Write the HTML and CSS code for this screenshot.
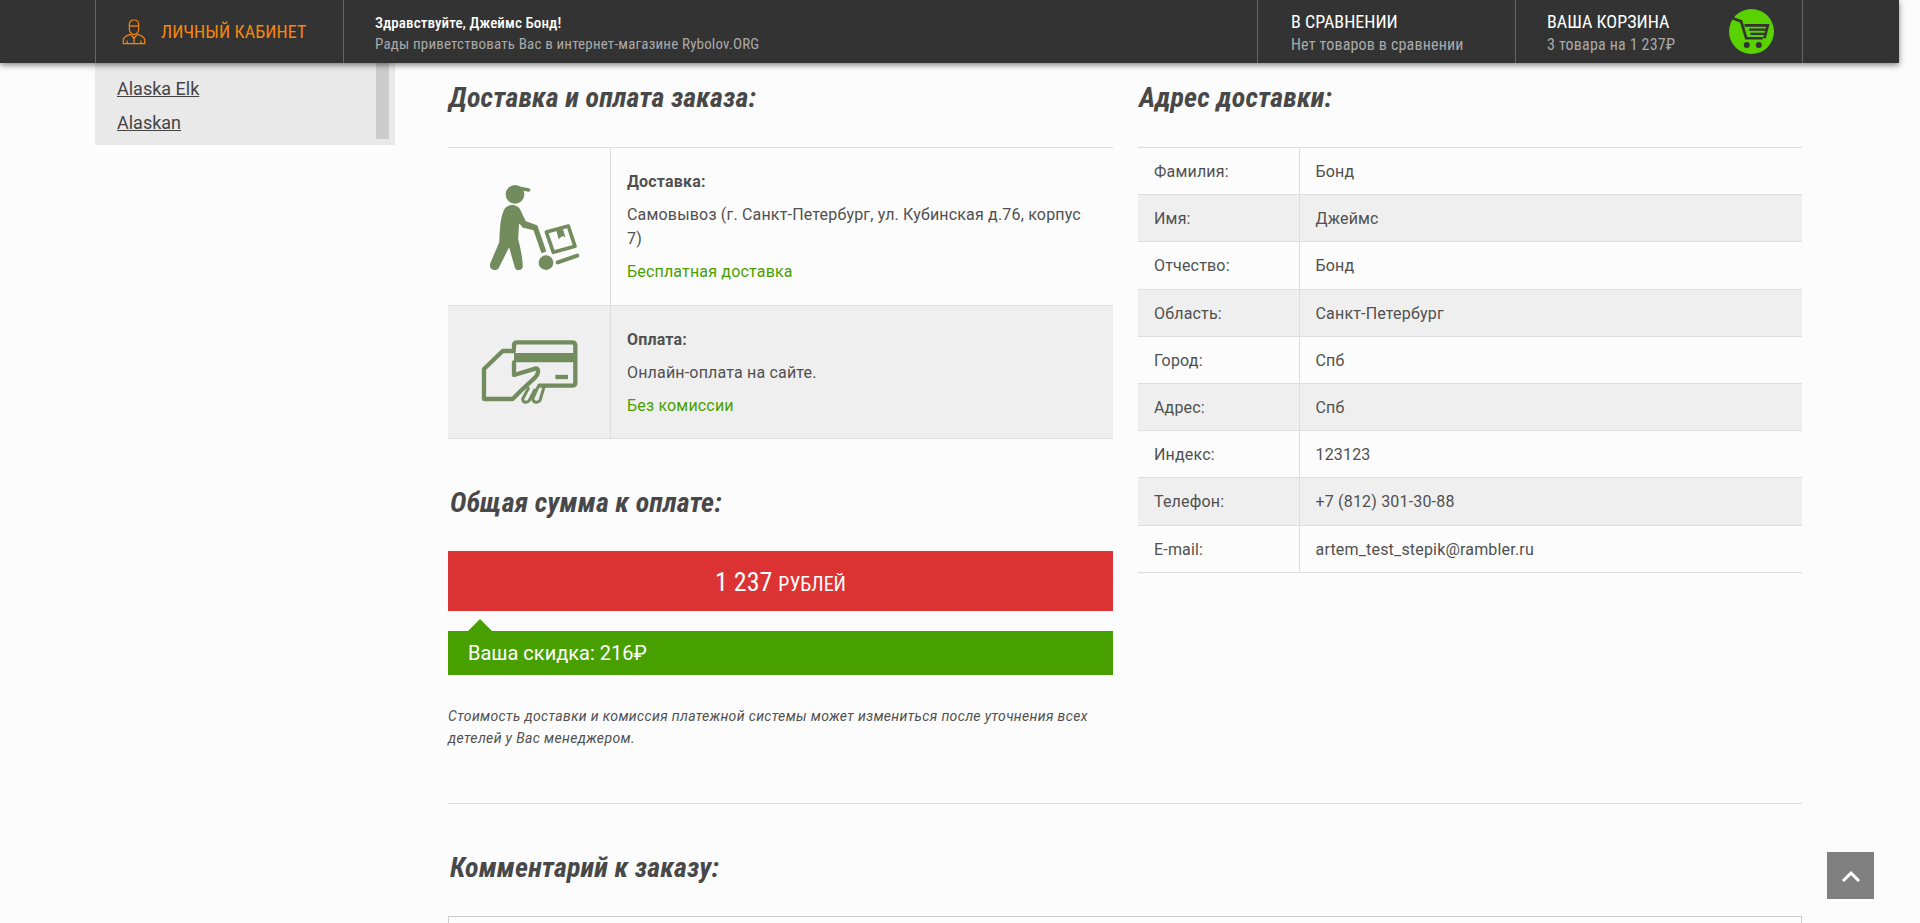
FILE: index.html
```html
<!DOCTYPE html>
<html lang="ru">
<head>
    <meta charset="UTF-8">
    <meta name="viewport" content="width=device-width, initial-scale=1.0">
    <title>Оформление заказа</title>
    <link rel="stylesheet" href="styles.css">
</head>
<body>
    <header class="topbar">
        <a class="topbar-cell account">
            <svg class="account-icon" viewBox="0 0 28 30" width="24" height="26" fill="none" stroke="#f7860f" stroke-width="1.4">
                <path d="M8.500 6.500C8.500 3 10.500 1 14 1s5.500 2 5.500 5.500v5c0 3.500-2.500 6.500-5.500 6.500s-5.500-3-5.500-6.500z"/>
                <path d="M8.500 7.500c3 .8 8 .8 11 0"/>
                <path d="M10 17.500C6 19.500 1.500 20 1.500 24.500V28.500H26.500V24.500C26.500 20 22 19.500 18 17.500"/>
                <path d="M10 18l4 4 4-4M12.500 21l1.500 2 1.500-2M14 23v5M6 25v3M22 25v3"/>
            </svg>
            <span>ЛИЧНЫЙ КАБИНЕТ</span>
        </a>
        <div class="topbar-cell welcome">
            <div class="welcome-title">Здравствуйте, Джеймс Бонд!</div>
            <div class="topbar-sub">Рады приветствовать Вас в интернет-магазине Rybolov.ORG</div>
        </div>
        <div class="topbar-cell compare">
            <div class="topbar-title">В СРАВНЕНИИ</div>
            <div class="topbar-sub">Нет товаров в сравнении</div>
        </div>
        <div class="topbar-cell cart">
            <div>
                <div class="topbar-title">ВАША КОРЗИНА</div>
                <div class="topbar-sub">3 товара на 1 237₽</div>
            </div>
            <svg class="cart-icon" viewBox="0 0 40 40" width="45" height="45">
                <circle cx="20" cy="20" r="20" fill="#5ad100"/>
                <path d="M1.500 7.500L10.800 11L15.300 26H30" fill="none" stroke="#333" stroke-width="2.400"/>
                <path d="M13.800 14.500H34.500L31.500 26" fill="none" stroke="#333" stroke-width="2.400"/>
                <path d="M18 18.300H32.500M19 22H31.500" stroke="#333" stroke-width="2"/>
                <circle cx="15.800" cy="32" r="2.700" fill="#333"/>
                <circle cx="26.500" cy="32" r="2.700" fill="#333"/>
            </svg>
        </div>
    </header>

    <div class="page">
        <aside class="sidebar">
            <ul class="brand-list">
                <li><a href="#">Alaska Elk</a></li>
                <li><a href="#">Alaskan</a></li>
            </ul>
            <div class="sidebar-thumb"></div>
        </aside>

        <main class="main">
            <div class="columns">
                <section class="col-left">
                    <h2 class="title">Доставка и оплата заказа:</h2>
                    <div class="info">
                        <div class="info-row">
                            <div class="info-icon">
                                <svg viewBox="-3 3 360 330" width="120" height="110" fill="#728c5e" stroke="#728c5e">
                                    <circle cx="135" cy="70" r="28" stroke="none"/>
                                    <path d="M140 50L176 57" stroke-width="10" stroke-linecap="round"/>
                                    <path d="M108 112C120 100 142 102 150 120L165 152L200 165L226 240L216 244L192 175L160 168L145 150L142 205C150 235 155 265 156 285C155 298 138 298 136 286L118 222L84 290C75 300 58 292 63 278L90 215C92 180 92 135 108 112z" stroke-width="5" stroke-linejoin="round"/>
                                    <circle cx="228" cy="275" r="22" stroke="none"/>
                                    <path d="M263 274L322 254" stroke-width="12" stroke-linecap="round" fill="none"/>
                                    <path d="M229 183L295 165L315 226L250 244z" fill="none" stroke-width="11" stroke-linejoin="round"/>
                                    <path d="M258 175L266 205L277 195L286 199L278 170z" stroke="none"/>
                                </svg>
                            </div>
                            <div class="info-text">
                                <p class="info-label">Доставка:</p>
                                <p>Самовывоз (г. Санкт-Петербург, ул. Кубинская д.76, корпус 7)</p>
                                <p class="info-note">Бесплатная доставка</p>
                            </div>
                        </div>
                        <div class="info-row shaded">
                            <div class="info-icon">
                                <svg viewBox="-3 6 360 270" width="120" height="90" fill="none" stroke="#728c5e" stroke-width="13" stroke-linejoin="round" stroke-linecap="round">
                                    <path d="M132 68V60C132 54 136 52 142 52H306C312 52 316 55 316 61V174C316 180 312 182 306 182H208"/>
                                    <path d="M132 84H316V112H132z" fill="#728c5e" stroke="none"/>
                                    <path d="M132 112V150L198 130C208 130 205 150 195 158L155 195L128 222H42V132L98 78H132"/>
                                    <path d="M256 156H294" stroke-width="13" stroke-linecap="butt"/>
                                    <path d="M175 190L158 222C158 234 172 234 178 226L194 195" stroke-width="9"/>
                                    <path d="M203 188L188 222C190 234 204 234 210 226L222 186" stroke-width="9"/>
                                </svg>
                            </div>
                            <div class="info-text">
                                <p class="info-label">Оплата:</p>
                                <p>Онлайн-оплата на сайте.</p>
                                <p class="info-note">Без комиссии</p>
                            </div>
                        </div>
                    </div>

                    <h2 class="title total-title">Общая сумма к оплате:</h2>
                    <div class="total">1 237 <span>рублей</span></div>
                    <div class="discount">Ваша скидка: 216₽</div>
                    <p class="disclaimer">Стоимость доставки и комиссия платежной системы может измениться после уточнения всех детелей у Вас менеджером.</p>
                </section>

                <section class="col-right">
                    <h2 class="title">Адрес доставки:</h2>
                    <table class="address">
                        <tr><td>Фамилия:</td><td>Бонд</td></tr>
                        <tr><td>Имя:</td><td>Джеймс</td></tr>
                        <tr><td>Отчество:</td><td>Бонд</td></tr>
                        <tr><td>Область:</td><td>Санкт-Петербург</td></tr>
                        <tr><td>Город:</td><td>Спб</td></tr>
                        <tr><td>Адрес:</td><td>Спб</td></tr>
                        <tr><td>Индекс:</td><td>123123</td></tr>
                        <tr><td>Телефон:</td><td>+7 (812) 301-30-88</td></tr>
                        <tr><td>E-mail:</td><td>artem_test_stepik@rambler.ru</td></tr>
                    </table>
                </section>
            </div>

            <section class="comment">
                <h2 class="title">Комментарий к заказу:</h2>
                <div class="comment-box"></div>
            </section>
        </main>
    </div>

    <a class="to-top" href="#">
        <svg viewBox="0 0 20 12" width="20" height="12" fill="none" stroke="#fff" stroke-width="3"><path d="M2 11L10 3L18 11"/></svg>
    </a>
</body>
</html>
```

FILE: styles.css
```css
html, body {
    margin: 0;
    padding: 0;
    height: 923px;
    overflow: hidden;
    background: #fcfcfc;
    color: #505050;
    font-family: Roboto, "Noto Sans", sans-serif;
    font-size: 16px;
    line-height: 24px;
}

.topbar {
    position: relative;
    z-index: 5;
    display: flex;
    box-sizing: border-box;
    width: 1899px;
    height: 63px;
    padding: 0 96px 0 95px;
    background: #333;
    box-shadow: 0 2px 6px rgba(0, 0, 0, 0.5);
    font-family: "Roboto Condensed", Roboto, sans-serif;
    font-stretch: condensed;
}

.topbar-cell {
    box-sizing: border-box;
    height: 63px;
    border-left: 1px solid #666;
}

.account {
    display: flex;
    align-items: center;
    gap: 15px;
    width: 248px;
    padding-left: 26px;
    color: #f7860f;
    font-size: 18px;
    letter-spacing: 0.1px;
}

.welcome {
    flex: 1;
    padding: 12px 0 0 31px;
}

.welcome-title {
    color: #fff;
    font-size: 15px;
    font-weight: 500;
    line-height: 22px;
    letter-spacing: 0.1px;
}

.compare {
    width: 258px;
    padding: 10px 0 0 33px;
}

.cart {
    display: flex;
    width: 288px;
    padding: 10px 0 0 31px;
    border-right: 1px solid #666;
}

.topbar-title {
    color: #fff;
    font-size: 18px;
    line-height: 24px;
}

.topbar-sub {
    color: #aaa;
    font-size: 16px;
    line-height: 21px;
    letter-spacing: 0.18px;
}

.welcome .topbar-sub {
    font-size: 15px;
}

.cart-icon {
    margin: -1px 0 0 54px;
}

.page {
    display: flex;
    padding-left: 95px;
}

.sidebar {
    position: relative;
    box-sizing: border-box;
    width: 300px;
    height: 82px;
    background: #e9e9e9;
}

.brand-list {
    margin: 0;
    padding: 9px 0 0 22px;
    list-style: none;
    font-size: 18px;
    line-height: 34px;
}

.brand-list a {
    color: #444;
}

.sidebar-thumb {
    position: absolute;
    top: 0;
    right: 6px;
    width: 13px;
    height: 76px;
    background: #ccc;
}

.main {
    width: 1354px;
    margin-left: 53px;
    letter-spacing: 0.18px;
}

.columns {
    display: flex;
    gap: 25px;
}

.col-left {
    width: 665px;
}

.col-right {
    width: 664px;
}

.title {
    margin: 0;
    height: 84px;
    padding: 18px 0 0 1px;
    box-sizing: border-box;
    font-family: "Roboto Condensed", Roboto, sans-serif;
    font-stretch: condensed;
    font-size: 28px;
    font-style: italic;
    font-weight: 700;
    line-height: 34px;
    letter-spacing: 0.13px;
    color: #484848;
}

.info {
    border-top: 1px solid #ddd;
}

.info-row {
    display: flex;
    border-bottom: 1px solid #ddd;
}

.info-row.shaded {
    background: #efefef;
}

.info-row.shaded .info-text {
    padding-bottom: 20px;
}

.info-icon {
    display: flex;
    flex: none;
    align-items: center;
    justify-content: center;
    width: 162px;
    border-right: 1px solid #ddd;
}

.info-text {
    padding: 22px 26px 21px 16px;
}

.info-text p {
    margin: 0 0 9px;
}

.info-text p:last-child {
    margin-bottom: 0;
}

.info-label {
    font-weight: 700;
}

.info-note {
    color: #48a000;
}

.total-title {
    height: 112px;
    padding-top: 47px;
    padding-left: 2px;
}

.total {
    height: 60px;
    background-color: #e03434;
    background-image: linear-gradient(135deg, #d93131 0 17%, #e43838 17% 50%, #d93131 50% 67%, #e43838 67%);
    background-size: 3px 3px;
    color: #fff;
    font-family: "Roboto Condensed", Roboto, sans-serif;
    font-stretch: condensed;
    font-size: 26px;
    line-height: 63px;
    text-align: center;
    letter-spacing: 0;
}

.total span {
    font-size: 20px;
    text-transform: uppercase;
}

.discount {
    position: relative;
    height: 44px;
    margin-top: 20px;
    padding-left: 20px;
    background: #48a000;
    color: #fff;
    font-size: 20px;
    line-height: 44px;
    letter-spacing: 0;
}

.discount::before {
    content: "";
    position: absolute;
    top: -12px;
    left: 20px;
    border-left: 12px solid transparent;
    border-right: 12px solid transparent;
    border-bottom: 12px solid #48a000;
}

.disclaimer {
    margin: 30px 0 0;
    font-size: 14px;
    font-style: italic;
    line-height: 22px;
    letter-spacing: 0.35px;
}

.address {
    width: 100%;
    border-collapse: collapse;
    border-top: 1px solid #ddd;
}

.address tr:nth-child(even) {
    background: #efefef;
}

.address td {
    height: 47.2px;
    padding: 2px 16px 0;
    box-sizing: border-box;
    border-bottom: 1px solid #ddd;
}

.address td:first-child {
    width: 161px;
    border-right: 1px solid #ddd;
}

.comment {
    margin-top: 54px;
    border-top: 1px solid #ddd;
}

.comment-box {
    height: 100px;
    border: 1px solid #ccc;
}

.comment .title {
    height: 112px;
    padding-top: 47px;
    padding-left: 2px;
}

.to-top {
    position: fixed;
    left: 1827px;
    top: 852px;
    display: flex;
    align-items: center;
    justify-content: center;
    width: 47px;
    height: 47px;
    background: #808080;
}
```
